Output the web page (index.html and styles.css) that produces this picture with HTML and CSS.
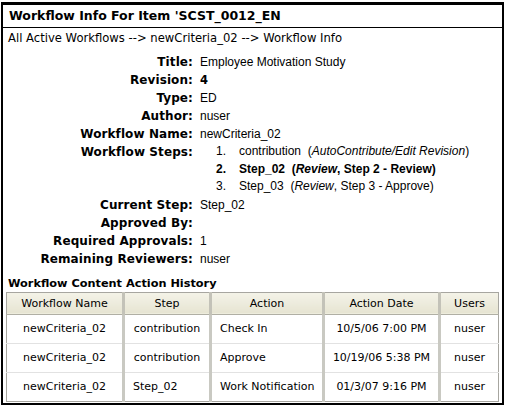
FILE: index.html
```html
<!DOCTYPE html>
<html>
<head>
    <link rel="stylesheet" href="styles.css">
</head>
<body>
    <div class="frame">
        <!-- Заголовок -->
        <div class="page-title">Workflow Info For Item 'SCST_0012_EN</div>
        <div class="crumbs">All Active Workflows --&gt; newCriteria_02 --&gt; Workflow Info</div>

        <!-- Информация о процессе -->
        <table class="info">
            <tr><td class="label">Title:</td><td class="value">Employee Motivation Study</td></tr>
            <tr><td class="label">Revision:</td><td class="value strong">4</td></tr>
            <tr><td class="label">Type:</td><td class="value">ED</td></tr>
            <tr><td class="label">Author:</td><td class="value">nuser</td></tr>
            <tr><td class="label">Workflow Name:</td><td class="value">newCriteria_02</td></tr>
            <tr>
                <td class="label top">Workflow Steps:</td>
                <td class="value">
                    <div class="steps">
                        <div class="step"><span class="num">1.</span>contribution&nbsp; (<i>AutoContribute/Edit Revision</i>)</div>
                        <div class="step current"><span class="num">2.</span>Step_02&nbsp; (<i>Review</i>, Step 2 - Review)</div>
                        <div class="step"><span class="num">3.</span>Step_03&nbsp; (<i>Review</i>, Step 3 - Approve)</div>
                    </div>
                </td>
            </tr>
            <tr><td class="label">Current Step:</td><td class="value">Step_02</td></tr>
            <tr><td class="label">Approved By:</td><td class="value"></td></tr>
            <tr><td class="label">Required Approvals:</td><td class="value">1</td></tr>
            <tr><td class="label">Remaining Reviewers:</td><td class="value">nuser</td></tr>
        </table>

        <!-- История действий -->
        <div class="section-title">Workflow Content Action History</div>
        <table class="history">
            <thead>
                <tr>
                    <th class="c-name">Workflow Name</th>
                    <th class="c-step">Step</th>
                    <th class="c-action">Action</th>
                    <th class="c-date">Action Date</th>
                    <th class="c-user">Users</th>
                </tr>
            </thead>
            <tbody>
                <tr>
                    <td class="center">newCriteria_02</td>
                    <td class="center">contribution</td>
                    <td>Check In</td>
                    <td class="center">10/5/06 7:00 PM</td>
                    <td class="center">nuser</td>
                </tr>
                <tr>
                    <td class="center">newCriteria_02</td>
                    <td class="center">contribution</td>
                    <td>Approve</td>
                    <td class="center">10/19/06 5:38 PM</td>
                    <td class="center">nuser</td>
                </tr>
                <tr>
                    <td class="center">newCriteria_02</td>
                    <td>Step_02</td>
                    <td>Work Notification</td>
                    <td class="center">01/3/07 9:16 PM</td>
                    <td class="center">nuser</td>
                </tr>
            </tbody>
        </table>
    </div>
</body>
</html>
```

FILE: styles.css
```css
* {
    margin: 0;
    padding: 0;
    box-sizing: border-box;
}

body {
    background: #ffffff;
    color: #000000;
    font-family: "DejaVu Sans", Verdana, sans-serif;
    font-size: 11px;
}

.frame {
    width: 503px;
    height: 403px;
    margin: 2px 0 0 1px;
    border: 2px solid #000000;
    border-top-width: 3px;
    overflow: hidden;
}

.page-title {
    height: 23px;
    padding: 3px 0 0 6px;
    font-size: 12.5px;
    font-weight: bold;
    border-bottom: 1px solid #000000;
}

.crumbs {
    padding: 3px 0 0 5px;
    height: 21px;
    font-size: 11.6px;
}

/* Таблица с информацией */
.info {
    border-collapse: collapse;
    margin-top: 4px;
}

.info td {
    height: 18px;
    vertical-align: middle;
    padding: 0;
}

.info .label {
    width: 197px;
    text-align: right;
    font-weight: bold;
    font-size: 12px;
    letter-spacing: 0.1px;
    padding-right: 7px;
    white-space: nowrap;
}

.info .label.top {
    vertical-align: top;
    padding-top: 2px;
}

.info .value {
    font-family: "Liberation Sans", Arial, sans-serif;
    font-size: 12px;
}

.info .value.strong {
    font-family: "DejaVu Sans", Verdana, sans-serif;
    font-size: 11.5px;
    font-weight: bold;
}

.steps {
    padding-left: 16px;
}

.step {
    height: 17.5px;
    line-height: 17.5px;
    white-space: nowrap;
}

.step .num {
    display: inline-block;
    width: 23px;
}

.step.current {
    font-weight: bold;
}

.section-title {
    font-weight: bold;
    font-size: 11.3px;
    padding: 9px 0 0 5px;
    height: 24px;
}

/* Таблица истории */
.history {
    margin-left: 3px;
    width: 493px;
    border-collapse: collapse;
    border: 1px solid #a7a6a0;
}

.history th {
    height: 22px;
    font-weight: normal;
    background: linear-gradient(#f4f3e8, #e6e4d2);
    border-bottom: 1px solid #b0afa4;
    border-left: 3px solid #c3c2b8;
    text-align: center;
}

.history td {
    height: 29px;
    padding-left: 8px;
    border-top: 1px solid #e2e2e2;
    border-left: 3px solid #c9c9c2;
    white-space: nowrap;
}

.history th:first-child,
.history td:first-child {
    border-left: none;
}

.history td.center {
    text-align: center;
    padding-left: 0;
}

.c-name { width: 117px; }
.c-step { width: 87px; }
.c-action { width: 113px; }
.c-date { width: 116px; }
```
